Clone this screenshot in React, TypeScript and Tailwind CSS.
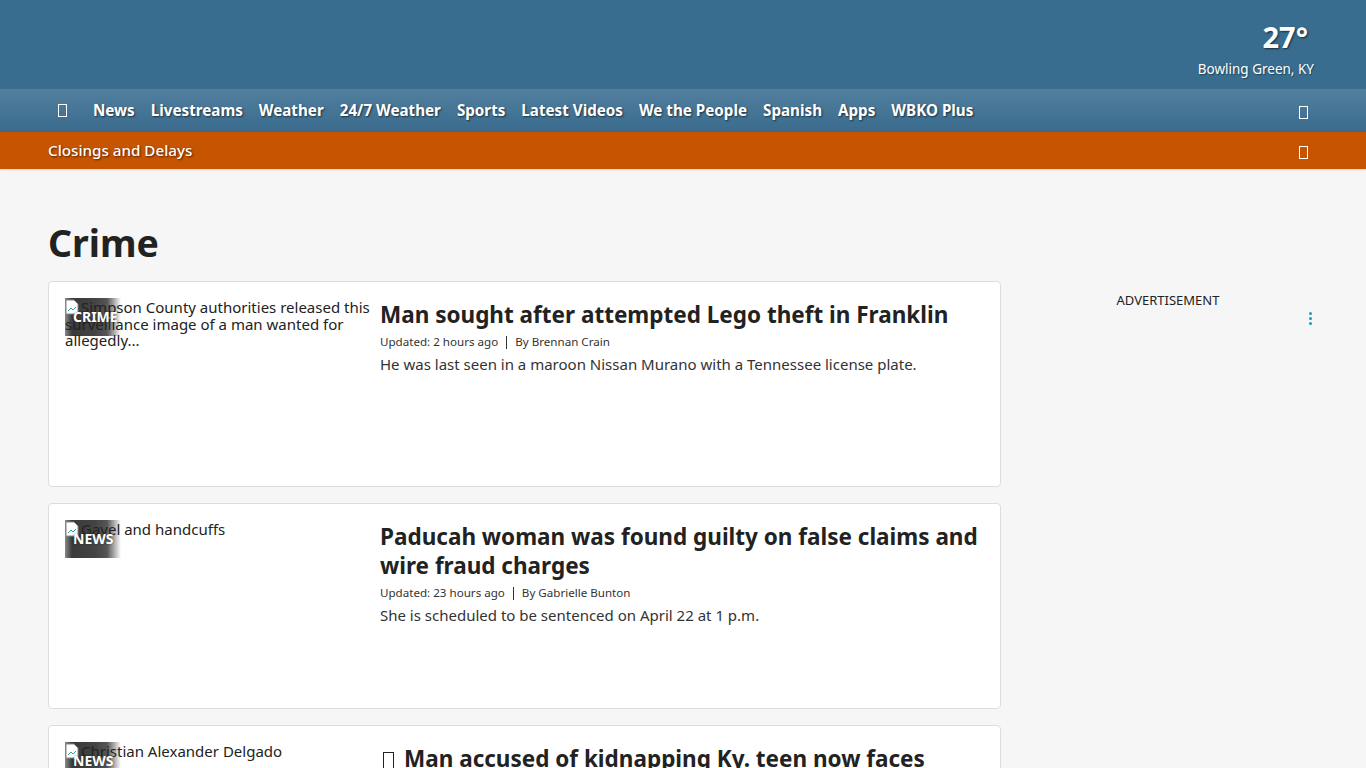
import React from "react";

const Tofu = ({ className = "" }: { className?: string }) => (
  <span className={"inline-block w-[9px] h-[13px] border border-current align-middle " + className} />
);

const BrokenImg = () => (
  <svg width="14" height="16" viewBox="0 0 14 16" className="inline-block align-[-2px] mr-[2px]">
    <path d="M1 1h8l4 4v10H1z" fill="#fff" stroke="#888" strokeWidth="1" />
    <path d="M3 12l3-3 2 2 3-3" stroke="#3a8" fill="none" strokeWidth="1" />
  </svg>
);

type Story = {
  tag: string;
  alt: string;
  title: string;
  icon?: boolean;
  updated: string;
  by: string;
  desc: string;
};

const stories: Story[] = [
  {
    tag: "CRIME",
    alt: "Simpson County authorities released this surveillance image of a man wanted for allegedly...",
    title: "Man sought after attempted Lego theft in Franklin",
    updated: "Updated: 2 hours ago",
    by: "By Brennan Crain",
    desc: "He was last seen in a maroon Nissan Murano with a Tennessee license plate.",
  },
  {
    tag: "NEWS",
    alt: "Gavel and handcuffs",
    title: "Paducah woman was found guilty on false claims and wire fraud charges",
    updated: "Updated: 23 hours ago",
    by: "By Gabrielle Bunton",
    desc: "She is scheduled to be sentenced on April 22 at 1 p.m.",
  },
  {
    tag: "NEWS",
    alt: "Christian Alexander Delgado",
    title: "Man accused of kidnapping Ky. teen now faces federal charges",
    icon: true,
    updated: "Updated: Feb. 14, 2025",
    by: "By Staff",
    desc: "",
  },
];

const navItems = ["News", "Livestreams", "Weather", "24/7 Weather", "Sports", "Latest Videos", "We the People", "Spanish", "Apps", "WBKO Plus"];

export default function App() {
  return (
    <div className="min-h-[768px] bg-[#f6f6f6] text-[#222]" style={{ fontFamily: '"Noto Sans", "Open Sans", sans-serif' }}>
      {/* top header */}
      <div className="h-[89px] bg-[#386d8f] flex justify-end items-start pr-[52px] pt-[18px]">
        <div className="flex flex-col items-end text-white">
          <div className="text-[29px] font-bold leading-[38px] [text-shadow:1px_1px_2px_rgba(0,0,0,0.6)] mr-[6px]">27°</div>
          <div className="text-[13.5px] leading-[18px] mt-[4px] [text-shadow:1px_1px_1px_rgba(0,0,0,0.4)]">Bowling Green, KY</div>
        </div>
      </div>
      {/* nav */}
      <div className="h-[43px] bg-gradient-to-b from-[#527f9f] to-[#3a6b8d] flex items-center px-[48px] text-white">
        <div className="flex items-center gap-[16px] text-[15.2px] font-bold [text-shadow:1px_1px_2px_rgba(0,0,0,0.6)]">
          <span className="w-[29px] flex justify-center"><Tofu /></span>
          {navItems.map((n) => (
            <span key={n}>{n}</span>
          ))}
        </div>
        <div className="ml-auto mr-[10px]"><Tofu /></div>
      </div>
      {/* closings */}
      <div className="h-[37px] bg-[#c75400] flex items-center px-[48px] text-white shadow-[0_1px_2px_rgba(0,0,0,0.15)]">
        <span className="text-[15.2px] font-medium [text-shadow:1px_1px_2px_rgba(0,0,0,0.6)]">Closings and Delays</span>
        <div className="ml-auto mr-[10px]"><Tofu /></div>
      </div>

      <div className="px-[48px] pt-[50px]">
        <h1 className="text-[37.5px] font-bold leading-[48px] text-[#222] mb-[14px]">Crime</h1>
        <div className="flex gap-[17px]">
          <div className="w-[953px] flex flex-col gap-[16px]">
            {stories.map((s, i) => (
              <div key={i} className="bg-white border border-[#ddd] rounded-[4px] p-[16px] flex gap-[15px]">
                <div className="w-[300px] h-[172px] shrink-0 relative">
                  <div className="absolute left-0 top-0 w-[56px] h-[38px]" style={{ backgroundImage: "linear-gradient(to right, #8a8a8a 0px, #3a3a3a 7px, #444 30px, #555 42px, rgba(255,255,255,0.9) 56px)" }} />
                  <div className="relative text-[15px] leading-[16.5px] text-[#222] pt-[1px] w-[310px]">
                    <BrokenImg />
                    {s.alt}
                  </div>
                  <div className="absolute left-[8px] top-[10px] text-[14px] font-bold text-white leading-[18px] [text-shadow:0_0_2px_rgba(0,0,0,0.5)]">{s.tag}</div>
                </div>
                <div className="flex-1 min-w-0 pt-[2px]">
                  <h2 className="text-[22.5px] font-bold leading-[29px] text-[#222]">
                    {s.icon && <Tofu className="ml-[3px] mr-[10px] w-[11px] h-[17px] align-[-1px]" />}
                    {s.title}
                  </h2>
                  <div className="mt-[5px] text-[11.6px] leading-[16px] text-[#333] flex items-center">
                    <span>{s.updated}</span>
                    <span className="mx-[8px] w-px h-[13px] bg-[#333]" />
                    <span>{s.by}</span>
                  </div>
                  <p className="mt-[4px] text-[15px] leading-[20px] text-[#333]">{s.desc}</p>
                </div>
              </div>
            ))}
          </div>
          <div className="w-[300px] flex flex-col items-center pt-[10px]">
            <div className="text-[13px] text-[#222] leading-[18px]">ADVERTISEMENT</div>
            <div className="self-end mr-[6px] mt-[3px] flex flex-col gap-[2px] items-center">
              <span className="w-[3px] h-[3px] rounded-full bg-[#1a9bb0]" />
              <span className="w-[3px] h-[3px] rounded-full bg-[#1a9bb0]" />
              <span className="w-[3px] h-[3px] rounded-full bg-[#1a9bb0]" />
            </div>
          </div>
        </div>
      </div>
    </div>
  );
}
